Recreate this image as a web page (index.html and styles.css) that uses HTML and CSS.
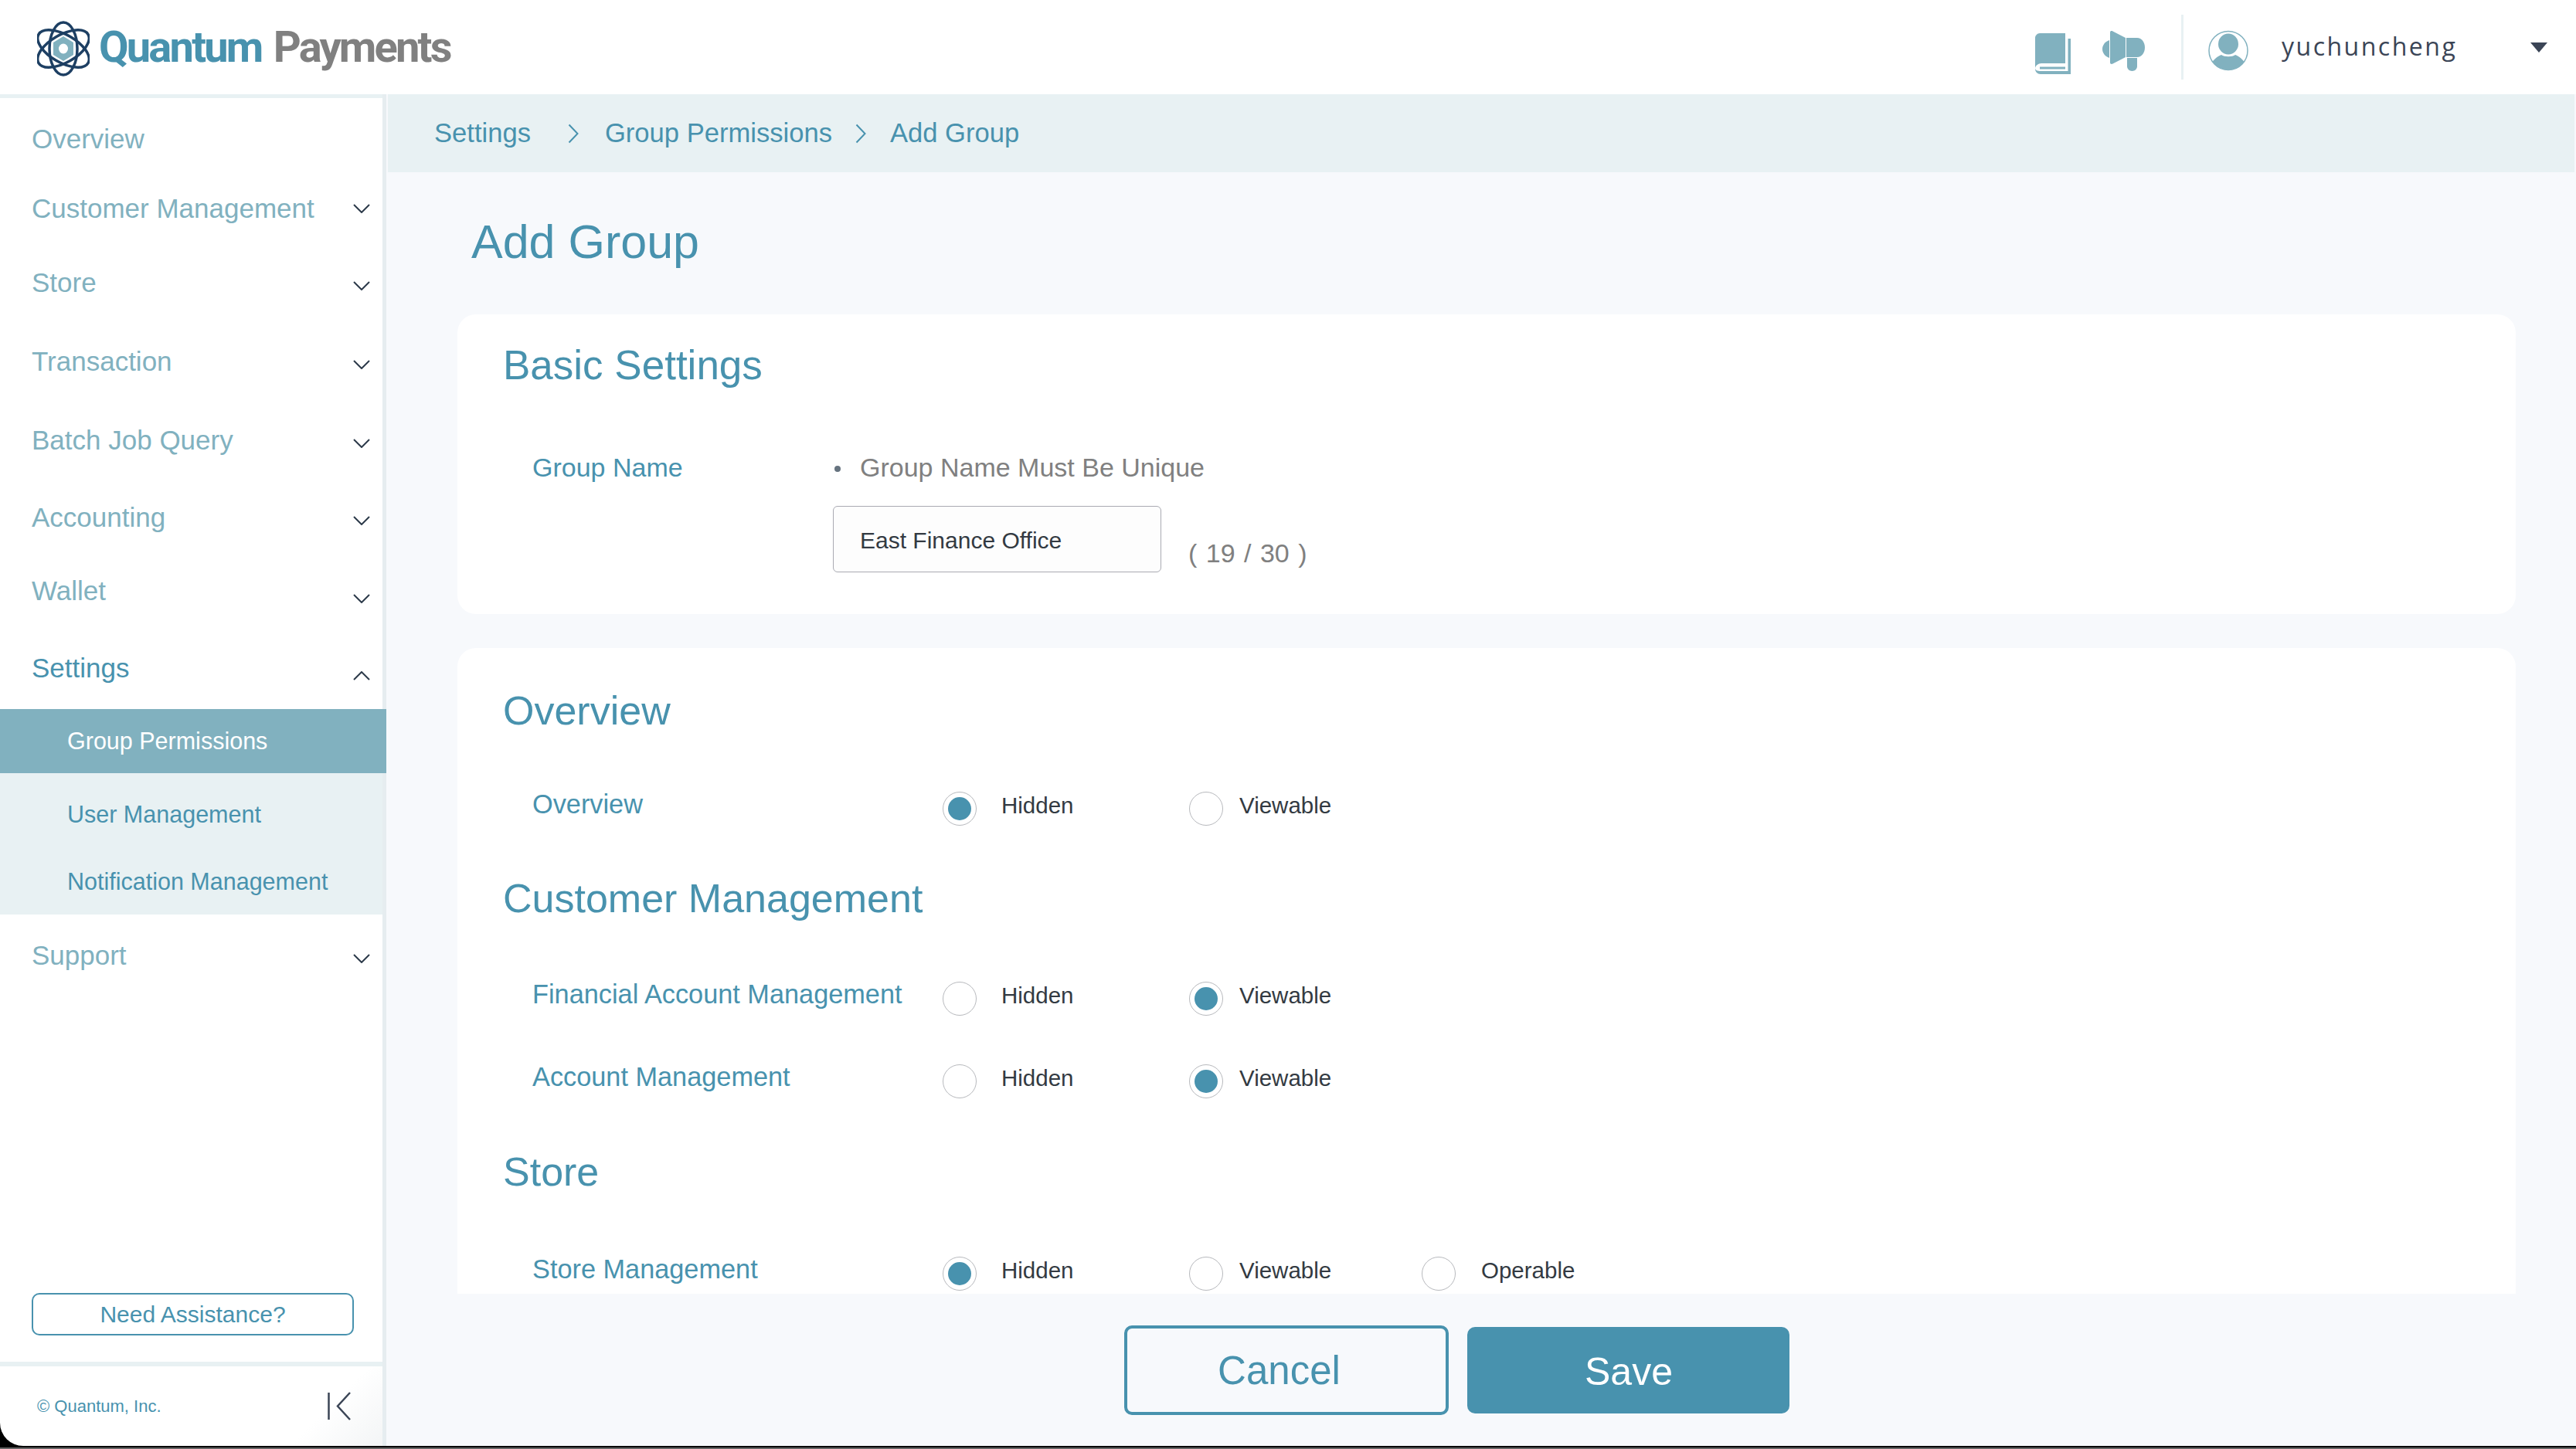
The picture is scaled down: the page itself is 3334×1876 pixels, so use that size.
FILE: index.html
```html
<!doctype html>
<html lang="en">
<head>
    <meta charset="UTF-8">
    <title>Add Group</title>
    <link rel="stylesheet" href="styles.css">
</head>
<body>
    <svg xmlns="http://www.w3.org/2000/svg" class="sprites">
        <symbol id="chevron-down" viewBox="0 0 22 12">
            <path d="M1 1l10 10L21 1" fill="none" stroke="currentColor" stroke-width="2"/>
        </symbol>
        <symbol id="chevron-up" viewBox="0 0 22 12">
            <path d="M1 11L11 1l10 10" fill="none" stroke="currentColor" stroke-width="2"/>
        </symbol>
        <symbol id="chevron-right" viewBox="0 0 14 26">
            <path d="M1.5 1.5L12.5 13 1.5 24.5" fill="none" stroke="currentColor" stroke-width="2"/>
        </symbol>
    </svg>

    <header class="topbar">
        <div class="logo">
            <svg class="logo-mark" viewBox="0 0 68 72">
                <path d="M34 20l13 8v16l-13 8-13-8V28z" fill="#81b1bf"/>
                <ellipse cx="34" cy="36" rx="6" ry="6.500" fill="#fff"/>
                <g fill="none" stroke="#1d3f63" stroke-width="3.500">
                    <ellipse cx="34" cy="36" rx="18" ry="34"/>
                    <ellipse cx="34" cy="36" rx="18" ry="37" transform="rotate(60 34 36)"/>
                    <ellipse cx="34" cy="36" rx="18" ry="37" transform="rotate(-60 34 36)"/>
                </g>
            </svg>
            <span class="logo-text"><span class="logo-a">Quantum</span> <span class="logo-b">Payments</span></span>
        </div>
        <div class="topbar-right">
            <svg class="icon-book" viewBox="0 0 46 53">
                <path d="M6 0h33v39H8c-4 0-8 3-8 7V6c0-3 3-6 6-6z" fill="#81b1bf"/>
                <rect x="6" y="43.500" width="33" height="3" fill="#81b1bf"/>
                <path d="M0 45c0 3 3 4 7 4h35.500V7H46v46H7c-4 0-7-3-7-7z" fill="#81b1bf"/>
            </svg>
            <svg class="icon-horn" viewBox="0 0 55 52">
                <path d="M10 2c0-2 2-2.500 3.500-1.500L30 9v25l-16.500 8.500C12 43.500 10 43 10 41z" fill="#81b1bf"/>
                <path d="M9 12v23C3 33 0 28 0 23.500S3 14 9 12z" fill="#81b1bf"/>
                <path d="M31 9h14c6 0 10 6 10 12.500S51 34 45 34H31z" fill="#81b1bf"/>
                <path d="M32 35h13v11c0 3-3 6-6.500 6S32 49 32 46z" fill="#81b1bf"/>
            </svg>
            <span class="topbar-line"></span>
            <svg class="icon-user" viewBox="0 0 52 53">
                <defs><clipPath id="avatar-clip"><circle cx="26" cy="26.500" r="25"/></clipPath></defs>
                <circle cx="26" cy="26.500" r="25" fill="#fff" stroke="#81b1bf" stroke-width="1.500"/>
                <ellipse cx="26" cy="18" rx="13" ry="13.500" fill="#81b1bf"/>
                <path d="M4 43c4-6 8-9 13-11 4 3 14 3 18 0 5 2 9 5 13 11v12H4z" fill="#81b1bf" clip-path="url(#avatar-clip)"/>
            </svg>
            <span class="username">yuchuncheng</span>
            <span class="caret"></span>
        </div>
    </header>

    <aside class="sidebar">
        <nav class="nav">
            <a class="nav-row">Overview</a>
            <a class="nav-row">Customer Management <svg class="chev"><use href="#chevron-down"/></svg></a>
            <a class="nav-row">Store <svg class="chev chev-a"><use href="#chevron-down"/></svg></a>
            <a class="nav-row">Transaction <svg class="chev chev-a"><use href="#chevron-down"/></svg></a>
            <a class="nav-row">Batch Job Query <svg class="chev chev-a"><use href="#chevron-down"/></svg></a>
            <a class="nav-row">Accounting <svg class="chev chev-a"><use href="#chevron-down"/></svg></a>
            <a class="nav-row">Wallet <svg class="chev chev-b"><use href="#chevron-down"/></svg></a>
            <a class="nav-row nav-open">Settings <svg class="chev chev-b"><use href="#chevron-up"/></svg></a>
            <div class="subnav">
                <a class="sub-row sub-active">Group Permissions</a>
                <a class="sub-row">User Management</a>
                <a class="sub-row">Notification Management</a>
            </div>
            <a class="nav-row">Support <svg class="chev chev-a"><use href="#chevron-down"/></svg></a>
        </nav>
        <div class="help">
            <button class="help-btn">Need Assistance?</button>
        </div>
        <div class="side-foot">
            <span>© Quantum, Inc.</span>
            <svg class="collapse" viewBox="0 0 30 37">
                <path d="M1.500 1v35M29 1L13 18.500 29 36" fill="none" stroke="#3b4556" stroke-width="2.500"/>
            </svg>
        </div>
    </aside>

    <main class="main">
        <div class="crumbs">
            <span>Settings</span>
            <svg class="crumb-chev"><use href="#chevron-right"/></svg>
            <span>Group Permissions</span>
            <svg class="crumb-chev"><use href="#chevron-right"/></svg>
            <span>Add Group</span>
        </div>

        <div class="content">
            <h1 class="page-title">Add Group</h1>

            <section class="card card-basic">
                <h2 class="card-title card-title-basic">Basic Settings</h2>
                <div class="name-row">
                    <div class="name-label">Group Name</div>
                    <div class="name-field">
                        <div class="hint"><span class="hint-dot"></span>Group Name Must Be Unique</div>
                        <div class="input-line">
                            <div class="text-input">East Finance Office</div>
                            <span class="count">( 19 / 30 )</span>
                        </div>
                    </div>
                </div>
            </section>

            <section class="card card-perms">
                <h2 class="card-title">Overview</h2>
                <div class="perm-row row-overview">
                    <div class="perm-label">Overview</div>
                    <label class="opt opt-hidden"><span class="radio radio-on"></span>Hidden</label>
                    <label class="opt opt-view"><span class="radio"></span>Viewable</label>
                </div>

                <h2 class="card-title title-customer">Customer Management</h2>
                <div class="perm-row">
                    <div class="perm-label">Financial Account Management</div>
                    <label class="opt opt-hidden"><span class="radio"></span>Hidden</label>
                    <label class="opt opt-view"><span class="radio radio-on"></span>Viewable</label>
                </div>
                <div class="perm-row">
                    <div class="perm-label">Account Management</div>
                    <label class="opt opt-hidden"><span class="radio"></span>Hidden</label>
                    <label class="opt opt-view"><span class="radio radio-on"></span>Viewable</label>
                </div>

                <h2 class="card-title title-store">Store</h2>
                <div class="perm-row row-store">
                    <div class="perm-label">Store Management</div>
                    <label class="opt opt-hidden"><span class="radio radio-on"></span>Hidden</label>
                    <label class="opt opt-view"><span class="radio"></span>Viewable</label>
                    <label class="opt opt-edit"><span class="radio"></span>Operable</label>
                </div>
            </section>
        </div>

        <div class="actions">
            <button class="btn btn-cancel">Cancel</button>
            <button class="btn btn-save">Save</button>
        </div>
    </main>

    <div class="base-bar"></div>
</body>
</html>
```

FILE: styles.css
```css
:root {
    --cl-teal: #4892ae;
    --cl-teal-light: #81b1bf;
    --cl-band: #e8f1f3;
    --cl-page: #f7f9fc;
    --cl-grey: #808080;
    --cl-ink: #333a42;
}

html, body {
    margin: 0;
    padding: 0;
    width: 100%;
    height: 100%;
    overflow: hidden;
}

body {
    display: grid;
    grid-template-rows: 122px 1fr 4px;
    grid-template-columns: 500px 1fr;
    font-family: "Liberation Sans", Arial, sans-serif;
    background: #000;
    color: var(--cl-ink);
}

.sprites {
    display: none;
}

/* top bar */

.topbar {
    grid-column: 1 / 3;
    display: flex;
    align-items: center;
    background: #fff;
    padding: 0 37px 0 48px;
}

.logo {
    display: flex;
    align-items: center;
    gap: 12px;
}

.logo-mark {
    width: 68px;
    height: 72px;
    margin-top: 4px;
}

.logo-text {
    font-family: Roboto, sans-serif;
    font-weight: 700;
    font-size: 56px;
    letter-spacing: -2.800px;
    line-height: 1;
    word-spacing: 4px;
}

.logo-a {
    color: var(--cl-teal);
}

.logo-b {
    color: var(--cl-grey);
}

.topbar-right {
    display: flex;
    align-items: center;
    margin-left: auto;
}

.icon-book {
    width: 46px;
    height: 53px;
    margin-top: 17px;
}

.icon-horn {
    width: 55px;
    height: 52px;
    margin: 10px 0 0 41px;
}

.topbar-line {
    width: 3px;
    height: 84px;
    background: var(--cl-band);
    margin: 0 32px 0 47px;
}

.icon-user {
    width: 52px;
    height: 53px;
    margin-top: 9px;
}

.username {
    width: 322px;
    margin: 0 0 3px 43px;
    font-family: "Open Sans", sans-serif;
    font-size: 32px;
    letter-spacing: 2.500px;
    color: #3b4556;
}

.caret {
    width: 0;
    height: 0;
    border-left: 11px solid transparent;
    border-right: 11px solid transparent;
    border-top: 13px solid #3b4556;
}

/* sidebar */

.sidebar {
    display: flex;
    flex-direction: column;
    min-height: 0;
    border-right: 5px solid #e6edf0;
}

.nav {
    flex: 1;
    display: grid;
    grid-template-rows: 90px 90px 102px 102px 102px 98px 92px 107px 266px 106px;
    align-content: start;
    background: #fff;
    border-top: 5px solid var(--cl-band);
    padding-top: 8px;
}

.nav-row {
    display: flex;
    align-items: center;
    justify-content: space-between;
    padding: 0 16px 0 41px;
    font-size: 35px;
    color: var(--cl-teal-light);
}

.nav-open {
    color: var(--cl-teal);
}

.chev {
    width: 22px;
    height: 12px;
    color: #2c3a4a;
}

.chev-a {
    margin-top: 8px;
}

.chev-b {
    margin-top: 20px;
}

.subnav {
    display: grid;
    grid-template-rows: 83px 106px 68px;
    background: var(--cl-band);
    padding-bottom: 9px;
}

.sub-row {
    display: flex;
    align-items: center;
    padding-left: 87px;
    font-size: 30.500px;
    color: var(--cl-teal);
}

.sub-active {
    background: var(--cl-teal-light);
    color: #fff;
    margin-right: -5px;
}

.help {
    background: #fff;
    padding: 0 37px 34px 41px;
}

.help-btn {
    display: block;
    width: 100%;
    height: 55px;
    background: #fff;
    border: 2px solid var(--cl-teal);
    border-radius: 10px;
    font-family: inherit;
    font-size: 30px;
    color: var(--cl-teal);
}

.side-foot {
    display: flex;
    align-items: center;
    justify-content: space-between;
    height: 109px;
    box-sizing: border-box;
    padding: 0 41px 0 48px;
    border-top: 6px solid var(--cl-band);
    border-bottom-left-radius: 30px;
    background: linear-gradient(135deg, #fff 80%, #f3f5f6);
    font-size: 22px;
    color: var(--cl-teal);
}

.collapse {
    width: 30px;
    height: 37px;
}

/* main column */

.main {
    display: flex;
    flex-direction: column;
    min-height: 0;
    background: var(--cl-page);
}

.crumbs {
    flex: none;
    display: flex;
    align-items: center;
    height: 101px;
    margin: 0 2px;
    padding-left: 60px;
    background: var(--cl-band);
    font-size: 34.600px;
    color: var(--cl-teal);
}

.crumb-chev {
    width: 14px;
    height: 26px;
    margin: 0 34px 0 48px;
}

.crumb-chev + span + .crumb-chev {
    margin: 0 31px 0 30px;
}

.content {
    flex: 1;
    min-height: 0;
    overflow: hidden;
    padding: 0 78px 0 92px;
}

.page-title {
    margin: 50px 0 54px 18px;
    font-size: 61px;
    font-weight: 400;
    line-height: 80px;
    color: var(--cl-teal);
}

.card {
    background: #fff;
    border-radius: 24px;
    padding-left: 59px;
}

.card-basic {
    height: 388px;
    box-sizing: border-box;
    padding-top: 36px;
    margin-bottom: 44px;
}

.card-perms {
    padding-top: 51px;
    padding-bottom: 120px;
}

.card-title {
    margin: 0;
    font-size: 52px;
    font-weight: 400;
    line-height: 60px;
    color: var(--cl-teal);
}

.card-title-basic {
    font-size: 53px;
}

.title-customer {
    margin-top: 52px;
}

.title-store {
    margin-top: 53px;
}

.name-row {
    display: flex;
    margin-top: 72px;
    padding-left: 38px;
}

.name-label {
    width: 389px;
    font-size: 34px;
    line-height: 60px;
    color: var(--cl-teal);
}

.hint {
    display: flex;
    align-items: center;
    height: 60px;
    font-size: 34px;
    color: var(--cl-grey);
}

.hint-dot {
    width: 8px;
    height: 8px;
    margin: 3px 25px 0 2px;
    border-radius: 50%;
    background: #66737f;
}

.input-line {
    display: flex;
    margin-top: 20px;
}

.text-input {
    width: 425px;
    height: 86px;
    box-sizing: border-box;
    padding-left: 34px;
    border: 1.500px solid #a9aab2;
    border-radius: 6px;
    background: #fdfdfd;
    font-size: 30px;
    line-height: 87px;
}

.count {
    align-self: flex-end;
    margin: 0 0 5px 35px;
    font-size: 34px;
    line-height: 40px;
    word-spacing: 2px;
    color: var(--cl-grey);
}

.perm-row {
    display: flex;
    align-items: center;
    height: 76px;
    margin-top: 31px;
    padding-left: 38px;
}

.card-title + .perm-row {
    margin-top: 58px;
}

.card-title + .row-overview {
    margin-top: 55px;
}

.card-title + .row-store {
    margin-top: 60px;
}

.perm-label {
    width: 531px;
    margin-bottom: 4px;
    font-size: 34.300px;
    color: var(--cl-teal);
}

.opt {
    display: flex;
    align-items: center;
    font-size: 29.500px;
    line-height: 38px;
}

.opt-hidden {
    width: 319px;
    gap: 32px;
}

.opt-view {
    width: 301px;
    gap: 21px;
}

.opt-edit {
    gap: 33px;
}

.radio {
    flex: none;
    width: 44px;
    height: 44px;
    box-sizing: border-box;
    margin-top: 7px;
    border: 1.500px solid #b7b9bd;
    border-radius: 50%;
    background: #fff;
}

.radio-on {
    background: var(--cl-teal);
    background-clip: content-box;
    padding: 6px;
}

.actions {
    flex: none;
    display: flex;
    justify-content: center;
    align-items: flex-start;
    gap: 24px;
    height: 197px;
    box-sizing: border-box;
    padding: 41px 64px 0 0;
}

.btn {
    width: 420px;
    height: 116px;
    border-radius: 10px;
    font-family: inherit;
    font-size: 50px;
}

.btn-cancel {
    padding: 0 18px 0 0;
    background: var(--cl-page);
    border: 4px solid var(--cl-teal);
    font-size: 51px;
    color: var(--cl-teal);
}

.btn-save {
    width: 417px;
    height: 112px;
    margin-top: 2px;
    padding: 3px 0 0 2px;
    background: var(--cl-teal);
    border: 0;
    color: #fff;
}

.base-bar {
    grid-column: 1 / 3;
    border-top: 2px solid #000;
    background: #666;
}
```
